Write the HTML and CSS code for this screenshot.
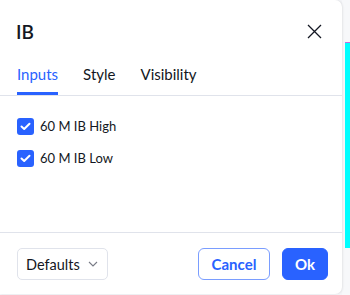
FILE: index.html
```html
<!DOCTYPE html>
<html>
<head>
<meta charset="utf-8">
<link rel="stylesheet" href="styles.css">
</head>
<body>
<div class="page">
  <div class="dialog">
    <div class="header">
      <div class="title">IB</div>
      <button class="close" aria-label="Close">
        <svg width="15" height="15" viewBox="0 0 15 15"><path d="M1 1 L14 14 M14 1 L1 14" stroke="#131722" stroke-width="1.3" fill="none"/></svg>
      </button>
    </div>
    <div class="tabs">
      <div class="tab active">Inputs</div>
      <div class="tab">Style</div>
      <div class="tab">Visibility</div>
    </div>
    <div class="content">
      <label class="row">
        <span class="check"><svg width="11" height="9" viewBox="0 0 11 9"><path d="M1.5 4.5 L4.2 7 L9.5 1.8" stroke="#fff" stroke-width="2" fill="none" stroke-linecap="round" stroke-linejoin="round"/></svg></span>
        <span class="label">60 M IB High</span>
      </label>
      <label class="row">
        <span class="check"><svg width="11" height="9" viewBox="0 0 11 9"><path d="M1.5 4.5 L4.2 7 L9.5 1.8" stroke="#fff" stroke-width="2" fill="none" stroke-linecap="round" stroke-linejoin="round"/></svg></span>
        <span class="label">60 M IB Low</span>
      </label>
    </div>
    <div class="footer">
      <button class="defaults">Defaults
        <svg width="10" height="6" viewBox="0 0 10 6"><path d="M1 1 L5 5 L9 1" stroke="#787b86" stroke-width="1.1" fill="none"/></svg>
      </button>
      <div class="actions">
        <button class="btn cancel">Cancel</button>
        <button class="btn ok">Ok</button>
      </div>
    </div>
  </div>
  <div class="side">
    <div class="side-top"></div>
    <div class="side-cyan"></div>
    <div class="side-bottom"></div>
  </div>
</div>
</body>
</html>
```
FILE: styles.css
```css
* { box-sizing: border-box; }
html, body { margin: 0; padding: 0; }
body {
  width: 350px;
  height: 295px;
  overflow: hidden;
  background: #f3f4f7;
  font-family: Lato, "Liberation Sans", sans-serif;
  color: #131722;
}
.page { display: flex; height: 295px; }
.dialog {
  width: 342px;
  height: 294px;
  background: #fff;
  border-radius: 0 7px 7px 0;
  display: flex;
  flex-direction: column;
  position: relative;
  z-index: 1;
  box-shadow: 1px 0 2px rgba(0,0,0,0.08);
}
.header {
  height: 63px;
  display: flex;
  align-items: center;
  justify-content: space-between;
  padding: 0 20px 0 16px;
}
.title { font-size: 19px; font-weight: 600; line-height: 24px; }
.close { border: 0; background: none; padding: 0; width: 15px; height: 15px; display: flex; }
.tabs {
  display: flex;
  gap: 25px;
  padding: 0 17px;
  border-bottom: 1px solid #e0e3eb;
  height: 33px;
}
.tab {
  font-size: 15px;
  line-height: 22px;
  height: 32px;
  border-bottom: 3px solid transparent;
  color: #131722;
}
.tab.active { color: #2962ff; border-bottom-color: #2962ff; }
.content {
  height: 137px;
  padding: 14px 17px 0;
  border-bottom: 1px solid #e0e3eb;
}
.row { display: flex; align-items: center; height: 32px; gap: 6px; }
.check {
  width: 17px; height: 17px;
  border-radius: 3px;
  background: #2962ff;
  display: flex; align-items: center; justify-content: center;
}
.label { font-size: 13px; }
.footer {
  display: flex;
  justify-content: space-between;
  padding: 15px 14px 0 17px;
}
button { font-family: inherit; cursor: pointer; }
.defaults {
  width: 91px; height: 32px;
  border: 1px solid #e0e3eb;
  border-radius: 5px;
  background: #fff;
  display: flex; align-items: center; justify-content: space-between;
  padding: 0 9px 0 8px;
  font-size: 14.5px;
  color: #131722;
}
.actions { display: flex; gap: 12px; }
.btn {
  height: 32px;
  border-radius: 6px;
  font-size: 15px;
  font-weight: 700;
  padding: 0;
}
.cancel { width: 72px; background: #fff; border: 1px solid #7a9dff; color: #2962ff; }
.ok { width: 46px; background: #2962ff; border: 1px solid #2962ff; color: #fff; }
.side { flex: 1; display: flex; flex-direction: column; padding-left: 3px; background: #f7f8fa; }
.side-top { height: 42px; }
.side-cyan { height: 206px; background: #00ffff; border-top: 1px solid #c46ce0; }
.side-bottom { flex: 1; }
```
